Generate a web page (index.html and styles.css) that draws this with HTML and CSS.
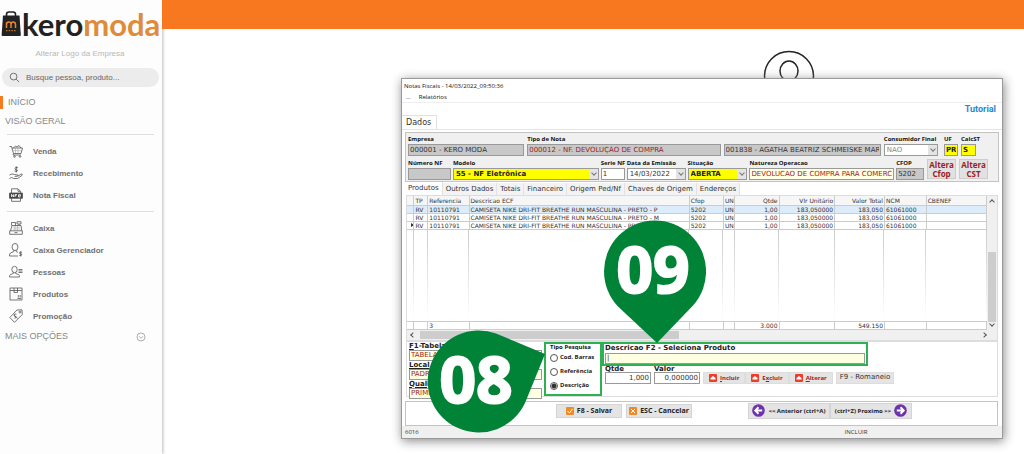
FILE: index.html
```html
<!DOCTYPE html>
<html lang="pt-BR">
<head>
<meta charset="utf-8">
<title>Kero Moda - Notas Fiscais</title>
<link rel="stylesheet" href="styles.css">
</head>
<body>
<div class="app">
  <aside class="sidebar">
    <div class="logo">
      <svg class="logo-bag" viewBox="0 0 20 27" aria-hidden="true">
        <path d="M5.500 8V4.500Q5.500 2 8 2H12Q14.500 2 14.500 4.500V8" fill="none" stroke="#222" stroke-width="1.600"/>
        <path d="M2 5.500H18.500L19.800 25Q19.800 26 18.800 26H1.600Q.6 26 .6 25Z" fill="#222"/>
        <path d="M5.500 18V12.500M5.500 14.500Q5.500 12 7.800 12T10 14.500V18M10 14.500Q10 12 12.200 12T14.500 14.500V18" fill="none" stroke="#e8862e" stroke-width="1.500"/>
        <path d="M5 20.700H15" stroke="#e8862e" stroke-width="1" stroke-dasharray="1.500 1.200"/>
      </svg>
      <span class="logo-text">kero<span class="logo-accent">moda</span></span>
    </div>
    <a class="change-logo" href="#">Alterar Logo da Empresa</a>
    <div class="search">
      <svg viewBox="0 0 12 12" aria-hidden="true"><circle cx="5" cy="5" r="3.700"/><path d="M7.800 7.800L11 11"/></svg>
      <input type="text" placeholder="Busque pessoa, produto..." aria-label="Busca">
    </div>
    <a class="section active" href="#">INÍCIO</a>
    <a class="section" href="#">VISÃO GERAL</a>
    <nav class="menu">
      <a href="#"><svg viewBox="0 0 14 14"><path d="M.5 2.500H2.500L4.500 9.500H12L13.500 4H3M4.500 4L6.500 2L8 3L10 1.500L12 4M4.500 9.500L4 11H12"/><path class="thin" d="M4 6.700H12.500M6.500 4V9M9 4V9"/><circle cx="5.500" cy="12.500" r=".8"/><circle cx="11" cy="12.500" r=".8"/></svg>Venda</a>
      <a href="#"><svg viewBox="0 0 14 14"><path d="M9 1.800Q6 .5 6 2.500T8.500 4.300Q8.500 6.300 5.500 5M7.300.3V6.500M.5 9Q3 7 5.500 8.500L9 9Q9.500 10.200 8 10.300H5.500M9 10L13 7.800Q14 8.500 12.500 9.800L8.500 12.500Q4 13 2.500 11.500L.5 12.500"/></svg>Recebimento</a>
      <a href="#"><svg viewBox="0 0 14 14"><path d="M2.500 5V.8H9L11.500 3.300V5M9 1V3.300H11.500M2.500 10V13.300H11.500V10"/><path class="solid" d="M.5 5H13.500V10.300H.5Z"/><path class="cut" d="M2.500 9V6.300L4.500 9V6.300M6 9V6.500H8M6 7.700H7.500M9.300 8H11.500V6.700H9.500V9H11.500"/></svg>Nota Fiscal</a>
    </nav>
    <nav class="menu">
      <a href="#"><svg viewBox="0 0 14 14"><path d="M.7 9.800H13.300V13.300H.7ZM1.500 9.800L3 4.500H12L12.800 9.800M2.500 1.500H6.500V4.500M2.500 1.500V4.500M8 .7H12V3H8ZM10 3V4.500M5.500 11.600H8.500"/><path class="thin" d="M4 6.200H11M3.700 8H11.500M6 5V9.500M8.500 5V9.500"/></svg>Caixa</a>
      <a href="#"><svg viewBox="0 0 14 14"><ellipse cx="6" cy="4" rx="3" ry="3.500"/><path d="M4.800 7.200V8.500L1.500 10Q.5 10.500.5 13H9M7.200 7.200V8.500L9 9.300M13 9.300Q10.500 8.500 10.500 10T12.800 11.200Q13 13 10.300 12.500M11.700 8.200V13.500"/></svg>Caixa Gerenciador</a>
      <a href="#"><svg viewBox="0 0 14 14"><ellipse cx="5.500" cy="4.500" rx="2.700" ry="3.200"/><path d="M4.300 7.300V8.500L1.500 9.500Q.5 10 .5 12H10.500Q10.500 10 9.500 9.500L6.700 8.500V7.300M9.500 4.500H13.500M9.500 6H13.500M9.500 7.500H13.500"/></svg>Pessoas</a>
      <a href="#"><svg viewBox="0 0 14 14"><path d="M1 1H13V13H1ZM1 3.500H13M5 1V5.500H8.500V1M8.500 11.500H12M9.300 10.500V8M11.200 10.500V8"/></svg>Produtos</a>
      <a href="#"><svg viewBox="0 0 14 14"><path d="M8 1L13 .8L13.300 5.500L5.500 13.300L.8 8.500ZM7.500 5.200Q5.500 4.300 5.300 6T7 7.500Q8 9.500 5.500 9M4.500 6L8.500 9.300"/><circle cx="11" cy="3" r="1"/></svg>Promoção</a>
    </nav>
    <a class="section more" href="#">MAIS OPÇÕES
      <svg viewBox="0 0 10 10" aria-hidden="true"><circle cx="5" cy="5" r="4"/><path d="M3 4.300L5 6.300L7 4.300"/></svg>
    </a>
  </aside>

  <main class="main">
    <header class="topbar"></header>
    <svg class="avatar" viewBox="0 0 52 52" aria-hidden="true"><circle cx="26" cy="26" r="24.500"/><ellipse cx="26" cy="21" rx="9" ry="10"/></svg>

    <section class="window">
      <div class="titlebar">Notas Fiscais - 14/03/2022_09:50:36</div>
      <div class="menubar"><span>...</span><span>Relatórios</span></div>
      <div class="tutorial"><a href="#">Tutorial</a></div>
      <div class="tabs page-tabs"><button class="tab on">Dados</button></div>

      <div class="panel head">
        <div class="row row-a">
          <div class="field"><label for="empresa">Empresa</label><input id="empresa" class="gray" value="000001 - KERO MODA" readonly></div>
          <div class="field"><label for="tipo">Tipo de Nota</label><input id="tipo" class="gray red" value="000012 - NF. DEVOLUÇÃO DE COMPRA" readonly></div>
          <div class="field bare"><input class="gray" value="001838 - AGATHA BEATRIZ SCHMEISKE MARTINS" aria-label="Cliente" readonly></div>
          <div class="field"><label for="cons">Consumidor Final</label><div class="combo dim"><select id="cons"><option>NAO</option></select><i></i></div></div>
          <div class="field uf"><label for="uf">UF</label><input id="uf" class="yellow" value="PR"></div>
          <div class="field st"><label for="st">CalcST</label><input id="st" class="yellow" value="S"></div>
        </div>
        <div class="row row-b">
          <div class="field"><label for="num">Número NF</label><input id="num" class="gray" readonly></div>
          <div class="field"><label for="modelo">Modelo</label><div class="combo yellow"><select id="modelo"><option>55 - NF Eletrônica</option></select><i></i></div></div>
          <div class="field"><label for="serie">Serie NF</label><input id="serie" value="1"></div>
          <div class="field"><label for="data">Data da Emissão</label><div class="combo"><select id="data"><option>14/03/2022</option></select><i></i></div></div>
          <div class="field"><label for="sit">Situação</label><div class="combo yellow"><select id="sit"><option>ABERTA</option></select><i></i></div></div>
          <div class="field"><label for="nat">Natureza Operacao</label><input id="nat" class="cream red" value="DEVOLUCAO DE COMPRA PARA COMERCIALIZACAO"></div>
          <div class="field cfop"><label for="cfop">CFOP</label><input id="cfop" class="gray" value="5202" readonly></div>
          <button class="alter">Altera Cfop</button>
          <button class="alter">Altera CST</button>
        </div>
      </div>

      <div class="tabs item-tabs">
        <button class="tab on">Produtos</button><button class="tab">Outros Dados</button><button class="tab">Totais</button><button class="tab">Financeiro</button><button class="tab">Origem Ped/Nf</button><button class="tab">Chaves de Origem</button><button class="tab">Endereços</button>
      </div>

      <div class="grid-box">
        <table class="items">
          <colgroup><col class="c-mark"><col class="c-tp"><col class="c-ref"><col class="c-desc"><col class="c-cfop"><col class="c-un"><col class="c-qtd"><col class="c-unit"><col class="c-total"><col class="c-ncm"><col></colgroup>
          <thead><tr><th></th><th>TP</th><th>Referencia</th><th>Descricao ECF</th><th>Cfop</th><th>UN</th><th class="n">Qtde</th><th class="n">Vlr Unitário</th><th class="n">Valor Total</th><th>NCM</th><th>CBENEF</th></tr></thead>
          <tbody>
            <tr class="selected"><td></td><td>RV</td><td>10110791</td><td>CAMISETA NIKE DRI-FIT BREATHE RUN MASCULINA - PRETO - P</td><td>5202</td><td>UN</td><td class="n">1,00</td><td class="n">183,050000</td><td class="n">183,050</td><td>61061000</td><td></td></tr>
            <tr><td></td><td>RV</td><td>10110791</td><td>CAMISETA NIKE DRI-FIT BREATHE RUN MASCULINA - PRETO - M</td><td>5202</td><td>UN</td><td class="n">1,00</td><td class="n">183,050000</td><td class="n">183,050</td><td>61061000</td><td></td></tr>
            <tr><td class="mark"></td><td>RV</td><td>10110791</td><td>CAMISETA NIKE DRI-FIT BREATHE RUN MASCULINA - PRETO - G</td><td>5202</td><td>UN</td><td class="n">1,00</td><td class="n">183,050000</td><td class="n">183,050</td><td>61061000</td><td></td></tr>
            <tr class="filler"><td></td><td></td><td></td><td></td><td></td><td></td><td></td><td></td><td></td><td></td><td></td></tr>
          </tbody>
          <tfoot><tr><td></td><td></td><td>3</td><td></td><td></td><td></td><td class="n">3.000</td><td></td><td class="n">549.150</td><td></td><td></td></tr></tfoot>
        </table>
        <div class="vscroll"><i class="arrow up"></i><span class="thumb"></span><i class="arrow down"></i></div>
        <div class="hscroll"><i class="arrow left"></i><span class="thumb"></span><i class="arrow right"></i></div>
      </div>

      <div class="entry">
        <div class="lists">
          <label for="f1"><u>F</u>1-Tabela</label><input id="f1" class="cream red" value="TABELA PADRAO">
          <label for="loc"><u>Local</u></label><input id="loc" class="cream red" value="PADRAO">
          <label for="qual"><u>Qual</u>idade</label><input id="qual" class="cream red" value="PRIMEIRA">
        </div>
        <fieldset class="kind marked">
          <legend>Tipo Pesquisa</legend>
          <label><input type="radio" name="kind">Cod. Barras</label>
          <label><input type="radio" name="kind">Referência</label>
          <label><input type="radio" name="kind" checked>Descrição</label>
        </fieldset>
        <div class="product">
          <div class="lookup marked"><label for="desc">Descricao F2 - Seleciona Produto</label><input id="desc" class="cream" value="|"></div>
          <div class="actions">
            <div class="amount"><label for="qtd"><u>Q</u>tde</label><input id="qtd" value="1,000"></div>
            <div class="amount"><label for="valor">Valor</label><input id="valor" value="0,000000"></div>
            <div class="group">
              <button class="act"><svg viewBox="0 0 8 8"><rect width="8" height="8" rx="1"/><path d="M1.500 5.500V4L4 2L6.500 4V5.500Z"/></svg><span><u>I</u>ncluir</span></button>
              <button class="act"><svg viewBox="0 0 8 8"><rect width="8" height="8" rx="1"/><path d="M1.500 5.500V4L4 2L6.500 4V5.500Z"/></svg><span>E<u>x</u>cluir</span></button>
              <button class="act"><svg viewBox="0 0 8 8"><rect width="8" height="8" rx="1"/><path d="M1.500 5.500V4L4 2L6.500 4V5.500Z"/></svg><span><u>A</u>lterar</span></button>
            </div>
            <button class="romaneio">F9 - Romaneio</button>
          </div>
        </div>
      </div>

      <div class="panel footer">
        <div class="save">
          <button><svg class="sq" viewBox="0 0 8 8"><rect width="8" height="8" rx="1"/><path d="M1.500 4L3.500 6L6.500 1.800"/></svg>F8 - Salvar</button>
          <button><svg class="sq" viewBox="0 0 8 8"><rect width="8" height="8" rx="1"/><path d="M2 2L6 6M6 2L2 6"/></svg>ESC - Cancelar</button>
        </div>
        <div class="paging">
          <button><svg class="rd" viewBox="0 0 14 14"><circle cx="7" cy="7" r="6.800"/><path d="M11 7H3.500M7 3.500L3.500 7L7 10.500"/></svg>&lt;&lt; Anterior (ctrl+A)</button>
          <button>(ctrl+Z) Proximo &gt;&gt;<svg class="rd" viewBox="0 0 14 14"><circle cx="7" cy="7" r="6.800"/><path d="M3 7H10.500M7 3.500L10.500 7L7 10.500"/></svg></button>
        </div>
      </div>
      <div class="status"><span>6016</span><span>INCLUIR</span></div>

      <div class="pin pin-08"><svg viewBox="0 0 118 103" aria-hidden="true"><path d="M118 24L69 3.500A51 51 0 1 0 98 73Z"/></svg><b>08</b></div>
      <div class="pin pin-09"><svg viewBox="0 0 102 123" aria-hidden="true"><path d="M53 123L14 86.500A51 51 0 1 1 89 85.500Z"/></svg><b>09</b></div>
    </section>
  </main>
</div>
</body>
</html>
```
FILE: styles.css
```css
* { box-sizing: border-box; }
body { margin: 0; background: #fff; font-family: "Liberation Sans", Arial, sans-serif; }
a { color: inherit; text-decoration: none; }
button, input, select { font: inherit; color: inherit; margin: 0; border-radius: 0; }
button { padding: 0; white-space: nowrap; }
.app { display: flex; min-height: 100vh; overflow: hidden; }

/* Sidebar */
.sidebar { flex: none; width: 162px; background: #fdfdfd; box-shadow: 1px 0 3px #bbb; color: #757575; font-size: 8px; position: relative; }
.logo { display: flex; align-items: flex-start; height: 45px; padding: 10px 0 0 1px; }
.logo-bag { width: 20px; height: 27px; flex: none; }
.logo-text { font: 700 31px/28px Lato, sans-serif; color: #222; margin-left: 1px; }
.logo-accent { color: #e08a3c; }
.change-logo { display: block; text-align: center; line-height: 18px; color: #b8b8b8; padding-right: 2px; }
.search { display: flex; align-items: center; gap: 6px; height: 19px; margin: 5px 3px 0 2px; padding-left: 7px; border-radius: 10px; background: #ececec; }
.search svg { width: 11px; height: 11px; fill: none; stroke: #666; stroke-width: 1; flex: none; }
.search input { border: 0; background: none; padding: 0; min-width: 0; flex: 1; outline: 0; }
.search input::placeholder { color: #666; opacity: 1; }
.section { display: block; font-size: 9px; line-height: 13px; margin-top: 6px; padding-left: 5px; color: #888; }
.section.active { margin-top: 9px; border-left: 3px solid #f47b20; }
.menu { border-top: 1px solid #ddd; margin: 6px 8px 0 7px; padding-top: 5px; }
.menu + .menu { margin-top: 5px; }
.menu a { display: flex; align-items: center; gap: 10px; height: 22px; padding-left: 2px; font-weight: 700; color: #707070; }
.menu svg { width: 14px; height: 14px; fill: none; stroke: #555; stroke-width: .8; }
.menu .solid { fill: #444; }
.menu .cut { stroke: #fff; }
.menu .thin { stroke: #999; stroke-width: .5; }
.section.more { display: flex; justify-content: space-between; margin-top: 3px; padding-right: 16px; }
.more svg { width: 10px; height: 10px; margin-top: 2px; fill: none; stroke: #999; stroke-width: .8; }

/* Main area */
.main { flex: 1; min-width: 0; position: relative; }
.topbar { height: 29px; background: #f7781f; }
.avatar { position: absolute; top: 50px; left: 601px; width: 52px; height: 52px; fill: none; stroke: #222; stroke-width: 1.500; }

/* Invoice window */
.window { position: relative; margin: 49px 21px 15px 239px; background: #fff; border: 1px solid #999; box-shadow: 1px 2px 10px #888; font: 7px/9px "DejaVu Sans", sans-serif; color: #333; }
.titlebar { font: 6px/14px "Open Sans", sans-serif; padding-left: 2px; color: #111; }
.menubar { display: flex; gap: 8px; padding-left: 4px; font: 6px/9px "Open Sans", sans-serif; color: #111; border-bottom: 1px solid #eee; }
.tutorial { text-align: right; padding-right: 6px; font: 700 9px/12px Roboto, sans-serif; color: #1e88d8; }
.tabs { display: flex; align-items: flex-end; }
.tab { border: 0; background: none; }
.page-tabs { border-bottom: 1px solid #e4e4e4; height: 15px; }
.page-tabs .tab { padding: 0 5px 0 4px; border: 1px solid #e0e0e0; border-width: 1px 1px 0 0; line-height: 13px; font-size: 8px; }
.panel { background: #f0f0f0; border: 1px solid #c4c4c4; }
.head { margin: 2px 3px 0; padding: 2px 2px 1px; }
.row { display: grid; }
.row-a { column-gap: 3px; grid-template-columns: minmax(0, 116fr) minmax(0, 193fr) minmax(0, 157fr) minmax(0, 54fr) minmax(0, 17fr) minmax(0, 15fr) minmax(0, 17fr); }
.row-b { column-gap: 2px; margin-top: 2px; grid-template-columns: minmax(0, 43fr) minmax(0, 146fr) minmax(0, 24fr) minmax(0, 59fr) minmax(0, 60fr) minmax(0, 145fr) minmax(0, 28fr) minmax(0, 30fr) minmax(0, 30fr) minmax(0, 6fr); }
.field { display: flex; flex-direction: column; justify-content: flex-end; }
.field label, .kind, .kind legend { font: 700 6px/9px "Open Sans", sans-serif; color: #111; white-space: nowrap; }
.field label { height: 9px; }
.field.uf { padding-left: 3px; }
.window input:not([type]) { width: 100%; height: 12px; border: 1px solid #999; padding: 0 1px; background: #fff; }
.window input.gray { background: #c8c8c8; }
.window input.yellow, .combo.yellow select { background: #ff0; font-weight: 700; color: #222; }
.window input.cream { background: #ffffe1; }
.window input.red { color: #9c1c1c; }
.combo { position: relative; display: flex; height: 12px; }
.combo select { appearance: none; flex: 1; min-width: 0; border: 1px solid #999; padding: 0 0 0 2px; background: #fff; }
.combo.dim { color: #888; }
.combo i { position: absolute; top: 1px; right: 1px; bottom: 1px; width: 9px; background: #e4e4e4; pointer-events: none; }
.combo i::after { content: ""; position: absolute; left: 3px; top: 2px; width: 3px; height: 3px; border: solid #777; border-width: 0 1px 1px 0; transform: rotate(45deg); }
.alter { margin: 1px 0 1px 1px; border: 1px solid #ccc; background: #e1e1e1; color: #9c1c1c; font: 700 8px/9px "Open Sans", sans-serif; white-space: normal; }

.item-tabs { height: 13px; margin: 0 3px; }
.item-tabs .tab { padding: 0 3px; line-height: 12px; background: #f3f3f3; border-right: 1px solid #e2e2e2; }
.item-tabs .tab.on { background: #fff; line-height: 13px; }

/* Product table */
.grid-box { margin: 0 4px; display: grid; grid-template-columns: minmax(0, 1fr) 10px; border: 1px solid #ddd; }
.items { width: 100%; table-layout: fixed; border-collapse: collapse; font-size: 6px; line-height: 7px; }
.items th, .items td { padding: 0 1px; text-align: left; font-weight: 400; white-space: nowrap; overflow: hidden; border-right: 1px solid #ccc; border-bottom: 1px solid #ccc; height: 8px; }
.items th { background: #f6f6f6; height: 9px; }
.items .n { text-align: right; }
.items .selected { background: #dcecfa; }
.items .filler td { height: 92px; border-right: 0; background: linear-gradient(#ccc, #fff) right / 1px 100% no-repeat; }
.items .mark::before { content: ""; display: block; margin-left: 3px; width: 0; border: solid transparent; border-width: 2px 0 2px 3px; border-left-color: #333; }
.c-mark { width: 1.200%; } .c-tp { width: 2.400%; } .c-ref { width: 7.100%; } .c-desc { width: 38%; } .c-cfop { width: 5.900%; } .c-un { width: 2%; } .c-qtd { width: 7.600%; } .c-unit { width: 9.600%; } .c-total { width: 8.600%; } .c-ncm { width: 7.200%; }
.vscroll { background: #f0f0f0; display: flex; flex-direction: column; align-items: center; padding: 4px 1px; }
.vscroll .thumb { width: 8px; flex: 0 0 70px; margin-top: auto; background: #cdcdcd; }
.hscroll { grid-column: 1 / -1; display: flex; align-items: center; background: #f0f0f0; height: 10px; padding: 0 11px 0 4px; }
.hscroll .thumb { height: 8px; width: 45%; margin: 0 auto 0 5px; background: #cdcdcd; }
.arrow { width: 4px; height: 4px; flex: none; border: solid #555; border-width: 1px 0 0 1px; }
.up { transform: rotate(45deg); } .down { transform: rotate(225deg); } .left { transform: rotate(-45deg); } .right { transform: rotate(135deg); }

/* Product entry */
.entry { display: flex; gap: 2px; margin: 0 4px; padding: 0 2px; border: 1px solid #ddd; height: 56px; }
.entry label { font-weight: 700; color: #222; white-space: nowrap; }
.lists { flex: 0 1 133px; min-width: 0; display: flex; flex-direction: column; }
.lists label { line-height: 8px; }
.window .lists input { height: 11px; flex: none; }
.marked { border: 2px solid #2db152; }
.kind { flex: none; width: 58px; margin: 0; padding: 7px 0 0 4px; display: flex; flex-direction: column; position: relative; }
.kind legend { position: absolute; top: -1px; left: 4px; padding: 0; }
.entry .kind label { display: flex; align-items: center; gap: 2px; height: 14px; font-size: 6px; }
.kind input { width: 8px; height: 8px; margin: 0; appearance: none; border: 1px solid #555; border-radius: 50%; background: #fff; }
.kind input:checked { background: radial-gradient(#333 0 2px, #fff 3px); }
.product { flex: 1; min-width: 0; }
.lookup { width: 68%; height: 24px; padding: 0 1px; margin-left: -2px; display: flex; flex-direction: column; justify-content: space-between; }
.actions { display: flex; align-items: flex-end; gap: 3px; margin-left: 1px; }
.amount { width: 46px; }
.entry .amount label { display: block; line-height: 6px; }
.window .amount input { text-align: right; }
.group { display: flex; }
.group button, .romaneio { height: 12px; border: 1px solid #ddd; background: #e4e4e4; }
.act { display: flex; align-items: center; gap: 3px; padding: 0 5px; color: #9c1c1c; font: 700 6px/10px "Open Sans", sans-serif; }
.act svg { width: 8px; height: 8px; fill: #f03c28; }
.act path { fill: #fff; }
.romaneio { padding: 0 3px; }

/* Footer */
.footer { margin: 4px 4px 0 3px; background: #fff; display: flex; justify-content: flex-end; align-items: flex-start; gap: 56px; height: 25px; padding: 1px 85px 0 0; }
.save, .paging { display: flex; }
.save { gap: 4px; padding-top: 1px; }
.footer button { display: flex; align-items: center; justify-content: center; gap: 3px; border: 1px solid #d4d4d4; background: #e4e4e4; color: #222; }
.footer .save button { width: 66px; height: 14px; font: 700 7px/12px "Open Sans", sans-serif; }
.footer .paging button { width: 82px; height: 16px; font: 700 6px/12px "Open Sans", sans-serif; }
.sq { width: 8px; height: 8px; fill: #f08a24; stroke: #fff; stroke-width: 1; }
.sq rect, .rd circle { stroke: none; }
.rd { width: 13px; height: 13px; flex: none; fill: #6d33ad; stroke: #fff; stroke-width: 2; }
.status { display: flex; background: #f0f0f0; padding: 0 3px; font: 6px/12px "Open Sans", sans-serif; }
.status span:first-child { width: 74%; }

/* Step markers */
.pin { position: absolute; color: #fff; }
.pin svg { display: block; width: 100%; fill: #008237; }
.pin b { position: absolute; top: 0; left: 0; width: 98px; text-align: center; font: 700 64px/98px "Open Sans", sans-serif; -webkit-text-stroke: 2px #fff; }
.pin-08 { left: 25px; top: 251px; width: 118px; }
.pin-09 { left: 202px; top: 141px; width: 102px; }
```
